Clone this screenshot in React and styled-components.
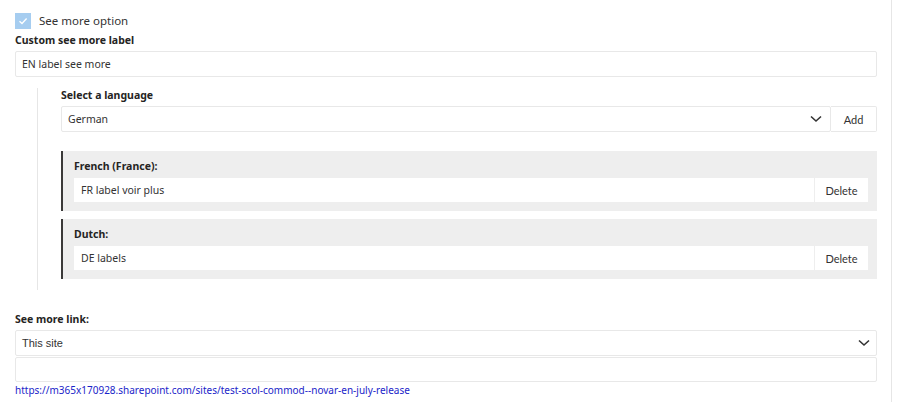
import React from "react";
import styled, { createGlobalStyle } from "styled-components";

const GlobalStyle = createGlobalStyle`
  body {
    margin: 0;
    background: #fff;
    font-family: "Noto Sans", "Open Sans", sans-serif;
    color: #323130;
  }
`;

const Page = styled.div`
  width: 892px;
  height: 402px;
  box-sizing: border-box;
  border-right: 1px solid #e6e6e6;
  padding: 12px 15px 0 15px;
  overflow: hidden;
`;

const Form = styled.div`
  width: 862px;
`;

const CheckRow = styled.label`
  display: flex;
  align-items: center;
  gap: 8px;
  font-size: 11.5px;
  color: #333;
  height: 17px;
`;

const CheckBox = styled.span`
  width: 16px;
  height: 16px;
  background: #a6cdf0;
  display: flex;
  align-items: center;
  justify-content: center;
`;

const Label = styled.div`
  font-size: 10.5px;
  font-weight: 700;
  color: #252423;
  line-height: 14px;
  margin: ${(p) => p.$mt || 0}px 0 4px;
`;

const Field = styled.div`
  box-sizing: border-box;
  height: ${(p) => p.$h || 25}px;
  border: 1px solid #e8e8e8;
  border-radius: 2px;
  background: #fff;
  display: flex;
  align-items: center;
  padding: 0 6px;
  font-size: ${(p) => (p.$arial ? 11 : 10.5)}px;
  color: #333;
  margin-bottom: ${(p) => p.$mb || 0}px;
  font-family: ${(p) => (p.$arial ? '"Liberation Sans", Arial, sans-serif' : "inherit")};
`;

const Grow = styled.span`
  flex: 1;
`;

const Nested = styled.div`
  margin: 11px 0 0 22px;
  border-left: 1px solid #e6e6e6;
  padding: 0 0 11px 23px;
`;

const SelectRow = styled.div`
  display: flex;
  height: 26px;
  margin-bottom: 19px;
`;

const SelectBox = styled(Field)`
  flex: 1;
  height: 26px;
  padding-right: 8px;
`;

const Button = styled.button`
  box-sizing: border-box;
  font-family: Lato, sans-serif;
  font-size: 11px;
  color: #333;
  background: #fff;
  border: ${(p) => (p.$bordered ? "1px solid #e8e8e8" : "none")};
  border-left: ${(p) => (p.$bordered ? "none" : "1px solid #eee")};
  border-radius: 0 2px 2px 0;
  padding: 0;
  width: ${(p) => p.$w}px;
  height: 100%;
  cursor: pointer;
`;

const LangBlock = styled.div`
  background: #eeeeee;
  border-left: 2px solid #3b3a39;
  padding: 8px 9px 9px 11px;
  margin-bottom: 8px;
  &:last-child {
    margin-bottom: 0;
  }
`;

const LangLabel = styled.div`
  font-size: 10.5px;
  font-weight: 700;
  color: #252423;
  line-height: 14px;
  margin-bottom: 5px;
`;

const LangRow = styled.div`
  display: flex;
  height: 24px;
  background: #fff;
`;

const LangInput = styled.div`
  flex: 1;
  display: flex;
  align-items: center;
  padding: 0 7px;
  font-size: 10.5px;
  color: #333;
`;

const Url = styled.a`
  display: block;
  font-size: 10px;
  line-height: 14px;
  color: #1a24c9;
  text-decoration: none;
  margin-top: 1px;
`;

const Chevron = () => (
  <svg width="12" height="8" viewBox="0 0 12 8">
    <path d="M1 1.5 L6 6 L11 1.5" fill="none" stroke="#333" strokeWidth="1.6" />
  </svg>
);

const Check = () => (
  <svg width="10" height="10" viewBox="0 0 10 10">
    <path d="M1.5 5.2 L4 7.5 L8.6 2.5" fill="none" stroke="#fff" strokeWidth="1.3" />
  </svg>
);

const languages = [
  { name: "French (France):", value: "FR label voir plus" },
  { name: "Dutch:", value: "DE labels" },
];

export default function App() {
  return (
    <Page>
      <GlobalStyle />
      <Form>
        <CheckRow>
          <CheckBox>
            <Check />
          </CheckBox>
          See more option
        </CheckRow>
        <Label $mt={4}>Custom see more label</Label>
        <Field $h={26}>EN label see more</Field>
        <Nested>
          <Label>Select a language</Label>
          <SelectRow>
            <SelectBox>
              <Grow>German</Grow>
              <Chevron />
            </SelectBox>
            <Button $bordered $w={46}>Add</Button>
          </SelectRow>
          {languages.map((l) => (
            <LangBlock key={l.name}>
              <LangLabel>{l.name}</LangLabel>
              <LangRow>
                <LangInput>{l.value}</LangInput>
                <Button $w={54}>Delete</Button>
              </LangRow>
            </LangBlock>
          ))}
        </Nested>
        <Label $mt={22}>See more link:</Label>
        <Field $arial $h={26} $mb={1}>
          <Grow>This site</Grow>
          <Chevron />
        </Field>
        <Field $h={25} />
        <Url href="#">https://m365x170928.sharepoint.com/sites/test-scol-commod--novar-en-july-release</Url>
      </Form>
    </Page>
  );
}
